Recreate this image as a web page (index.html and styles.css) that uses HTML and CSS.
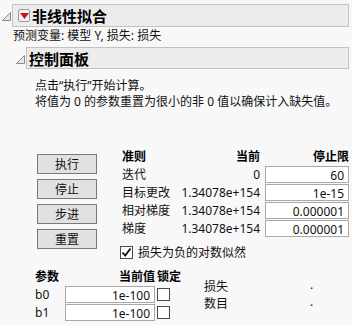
FILE: index.html
```html
<!DOCTYPE html>
<html lang="zh">
<head>
    <meta charset="UTF-8">
    <title>非线性拟合</title>
    <link rel="stylesheet" href="styles.css">
</head>
<body>

    <!-- Outer report -->
    <div class="outline-row">
        <svg class="disclosure" width="9" height="9" viewBox="0 0 9 9"><path d="M8.5 0.5 L8.5 8.5 L0.5 8.5 Z" fill="#e6e6e6" stroke="#8a8a8a"/></svg>
        <div class="outline-box">
            <span class="red-btn"><svg width="9" height="6" viewBox="0 0 9 6"><path d="M0 0 L9 0 L4.5 6 Z" fill="#d0101a"/></svg></span>
            <span class="outline-title">非线性拟合</span>
        </div>
    </div>
    <div class="subtitle">预测变量: 模型 Y, 损失: 损失</div>

    <!-- Control panel -->
    <div class="outline-row inner">
        <svg class="disclosure" width="9" height="9" viewBox="0 0 9 9"><path d="M8.5 0.5 L8.5 8.5 L0.5 8.5 Z" fill="#e6e6e6" stroke="#8a8a8a"/></svg>
        <div class="outline-box">
            <span class="outline-title">控制面板</span>
        </div>
    </div>

    <div class="panel">
        <p class="note">点击“执行”开始计算。</p>
        <p class="note">将值为 0 的参数重置为很小的非 0 值以确保计入缺失值。</p>

        <div class="controls">
            <div class="buttons">
                <button class="btn">执行</button>
                <button class="btn">停止</button>
                <button class="btn">步进</button>
                <button class="btn">重置</button>
            </div>
            <div>
                <div class="criteria">
                    <span class="head">准则</span>
                    <span class="head num">当前</span>
                    <span class="head num">停止限</span>

                    <span>迭代</span>
                    <span class="num">0</span>
                    <span class="field">60</span>

                    <span>目标更改</span>
                    <span class="num">1.34078e+154</span>
                    <span class="field">1e-15</span>

                    <span>相对梯度</span>
                    <span class="num">1.34078e+154</span>
                    <span class="field">0.000001</span>

                    <span>梯度</span>
                    <span class="num">1.34078e+154</span>
                    <span class="field">0.000001</span>
                </div>
                <div class="check-row">
                    <span class="checkbox checked"><svg width="11" height="11" viewBox="0 0 11 11"><path d="M1.5 5.5 L4.2 8.5 L9.5 1.5" fill="none" stroke="#111" stroke-width="1.8"/></svg></span>
                    <span>损失为负的对数似然</span>
                </div>
            </div>
        </div>

        <div class="params-area">
            <div class="params">
                <span class="head">参数</span>
                <span class="head num">当前值</span>
                <span class="head">锁定</span>

                <span>b0</span>
                <span class="field">1e-100</span>
                <span class="checkbox"></span>

                <span>b1</span>
                <span class="field">1e-100</span>
                <span class="checkbox"></span>
            </div>
            <div class="stats">
                <span>损失</span><span class="dot">.</span>
                <span>数目</span><span class="dot">.</span>
            </div>
        </div>
    </div>

</body>
</html>
```

FILE: styles.css
```css
* {
    margin: 0;
    padding: 0;
    box-sizing: border-box;
}
body {
    background-color: #f8f8f8;
    font-family: "Noto Sans", "Noto Sans CJK SC", sans-serif;
    font-size: 12px;
    color: #111;
    padding: 4px 3px 0 2px;
}
.outline-row {
    display: flex;
    align-items: flex-start;
    gap: 1px;
}
.outline-row.inner {
    margin-left: 14px;
    margin-top: 3px;
}
.disclosure {
    margin-top: 8px;
}
.outline-box {
    flex: 1;
    height: 23px;
    display: flex;
    align-items: center;
    gap: 2px;
    padding-left: 5px;
    background-color: #ececec;
    border: 1px solid #c2c2c2;
}
.outline-row.inner .outline-box {
    height: 22px;
    padding-left: 2px;
}
.red-btn {
    width: 12px;
    height: 13px;
    display: flex;
    justify-content: center;
    align-items: center;
    border: 1px solid #9a9a9a;
    border-radius: 2px;
    background: #f4f4f4;
}
.outline-title {
    font-size: 15px;
    font-weight: bold;
    color: #000;
}
.subtitle {
    margin: 1px 0 0 11px;
    line-height: 16px;
}
.panel {
    padding: 9px 0 0 31px;
}
.note {
    line-height: 16px;
    padding-left: 2px;
}
.controls {
    display: flex;
    align-items: flex-start;
    gap: 25px;
    margin-top: 38px;
}
.buttons {
    display: flex;
    flex-direction: column;
    gap: 5px;
    padding: 6px 0 0 4px;
}
.btn {
    width: 60px;
    height: 20px;
    font-family: inherit;
    font-size: 12px;
    color: #111;
    background-color: #e1e1e1;
    border: 1px solid #7a7a7a;
}
.criteria {
    display: grid;
    grid-template-columns: 50px 83px 84px;
    column-gap: 5px;
    row-gap: 1px;
    align-items: center;
}
.criteria > span {
    line-height: 17px;
    white-space: nowrap;
}
.head {
    font-weight: bold;
    color: #000;
}
.num {
    text-align: right;
    white-space: nowrap;
}
.field {
    height: 17px;
    line-height: 15px;
    text-align: right;
    padding-right: 4px;
    background-color: #fff;
    border: 1px solid #a9a9a9;
}
.check-row {
    display: flex;
    align-items: center;
    gap: 5px;
    margin-top: 6px;
    margin-left: -2px;
}
.checkbox {
    width: 13px;
    height: 13px;
    display: flex;
    justify-content: center;
    align-items: center;
    background-color: #fff;
    border: 1px solid #4a4a4a;
}
.params-area {
    display: flex;
    align-items: flex-start;
    margin-top: 7px;
    padding-left: 2px;
}
.params {
    display: grid;
    grid-template-columns: 28px 90px 30px;
    column-gap: 2px;
    row-gap: 1px;
    align-items: center;
}
.params > span {
    line-height: 17px;
}
.stats {
    display: grid;
    grid-template-columns: 106px auto;
    line-height: 17px;
    margin: 10px 0 0 17px;
}
.dot {
    line-height: 14px;
}
```
